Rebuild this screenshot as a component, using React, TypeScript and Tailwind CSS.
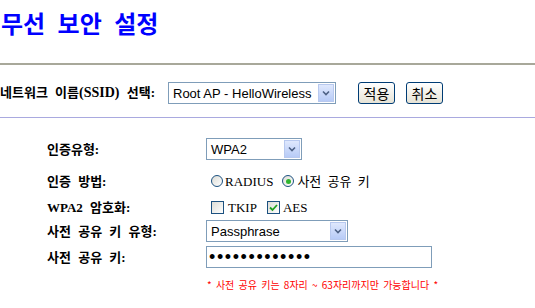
import React from 'react';

const serifKr = "font-['Liberation_Serif','Noto_Sans_CJK_KR',serif]";

function Arrow() {
  return (
    <div className="flex h-full w-[16px] items-center justify-center border border-[#b8c9ef] bg-gradient-to-b from-[#dfe8fd] to-[#b7cbf7]">
      <svg width="8" height="6" viewBox="0 0 8 6">
        <path d="M1 1.5 L4 4.5 L7 1.5" fill="none" stroke="#4d6185" strokeWidth="1.6" />
      </svg>
    </div>
  );
}

function FakeSelect({ value, width }: { value: string; width: string }) {
  return (
    <div className={`flex h-[22px] ${width} items-center border border-[#7f9db9] bg-white p-[1px]`}>
      <span className="flex-1 pl-[3px] font-['Liberation_Sans',sans-serif] text-[13px] leading-none text-black">{value}</span>
      <Arrow />
    </div>
  );
}

function XpButton({ children }: { children: React.ReactNode }) {
  return (
    <button className="flex h-[22px] w-[37px] items-center justify-center rounded-[3px] border border-[#003c74] bg-gradient-to-b from-white to-[#e6e3d6] font-['Noto_Sans_CJK_KR',sans-serif] text-[14px] leading-none text-black">
      {children}
    </button>
  );
}

function Radio({ checked }: { checked?: boolean }) {
  return (
    <span className="flex h-[12px] w-[12px] items-center justify-center rounded-full border border-[#1c5180] bg-gradient-to-br from-[#dcdcd6] to-white">
      {checked && <span className="h-[5px] w-[5px] rounded-full bg-[#2fb52f]" />}
    </span>
  );
}

function Check({ checked }: { checked?: boolean }) {
  return (
    <span className="flex h-[13px] w-[13px] items-center justify-center border border-[#1c5180] bg-gradient-to-br from-[#dcdcd6] to-white">
      {checked && (
        <svg width="9" height="9" viewBox="0 0 9 9">
          <path d="M1 4.5 L3.5 7 L8 2" fill="none" stroke="#21a121" strokeWidth="1.8" />
        </svg>
      )}
    </span>
  );
}

function Row({ label, children, className = '' }: { label: React.ReactNode; children: React.ReactNode; className?: string }) {
  return (
    <div className={`flex h-[22px] items-center ${className}`}>
      <div className={`w-[159px] ${serifKr} text-[13px] font-bold leading-none text-black [word-spacing:4px]`}>{label}</div>
      <div className="flex items-center">{children}</div>
    </div>
  );
}

export default function App() {
  return (
    <div className="h-[308px] w-[535px] overflow-hidden bg-white">
      {/* Title */}
      <h1 className="pl-[1px] pt-[10px] font-['Noto_Sans_CJK_KR',sans-serif] text-[24px] font-bold leading-[26px] text-[#0000ff] [word-spacing:7px]">
        무선 보안 설정
      </h1>

      <div className="mt-[27px] border-t-2 border-[#a8a89a]" />

      {/* SSID select */}
      <div className="mt-[17px] flex h-[22px] items-center">
        <span className={`w-[168px] ${serifKr} text-[13px] font-bold leading-none text-black [word-spacing:4px]`}>
          네트워크 이름<span className="text-[14px]">(SSID)</span> 선택:
        </span>
        <FakeSelect value="Root AP - HelloWireless" width="w-[168px]" />
        <div className="ml-[22px] flex gap-[11px]">
          <XpButton>적용</XpButton>
          <XpButton>취소</XpButton>
        </div>
      </div>

      <div className="mt-[13px] border-t border-[#a9a9df]" />

      {/* Form */}
      <div className="pl-[47px] pt-[20px]">
        <Row label="인증유형:">
          <FakeSelect value="WPA2" width="w-[96px]" />
        </Row>

        <Row label="인증 방법:" className="mt-[10px]">
          <div className={`flex items-center pl-[5px] ${serifKr} text-[13px] leading-none text-black`}>
            <Radio />
            <span className="ml-[2px]">RADIUS</span>
            <span className="ml-[9px]"><Radio checked /></span>
            <span className="ml-[3px] [word-spacing:3px]">사전 공유 키</span>
          </div>
        </Row>

        <Row label="WPA2 암호화:" className="mt-[4px]">
          <div className={`flex items-center pl-[5px] ${serifKr} text-[13px] leading-none text-black`}>
            <Check />
            <span className="ml-[4px]">TKIP</span>
            <span className="ml-[10px]"><Check checked /></span>
            <span className="ml-[3px]">AES</span>
          </div>
        </Row>

        <Row label="사전 공유 키 유형:" className="mt-[2px]">
          <FakeSelect value="Passphrase" width="w-[142px]" />
        </Row>

        <Row label="사전 공유 키:" className="mt-[4px]">
          <input
            type="password"
            readOnly
            value="HelloWireless"
            className="h-[22px] w-[226px] border border-[#7f9db9] bg-white px-[2px] font-['Liberation_Sans',sans-serif] text-[18px] leading-none tracking-[1.6px] text-black outline-none"
          />
        </Row>

        <p className="mt-[11px] pl-[160px] font-['Noto_Sans_CJK_KR',sans-serif] text-[10px] leading-[12px] text-[#ff0000] [word-spacing:2px]">
          * 사전 공유 키는 8자리 ~ 63자리까지만 가능합니다 *
        </p>
      </div>
    </div>
  );
}
